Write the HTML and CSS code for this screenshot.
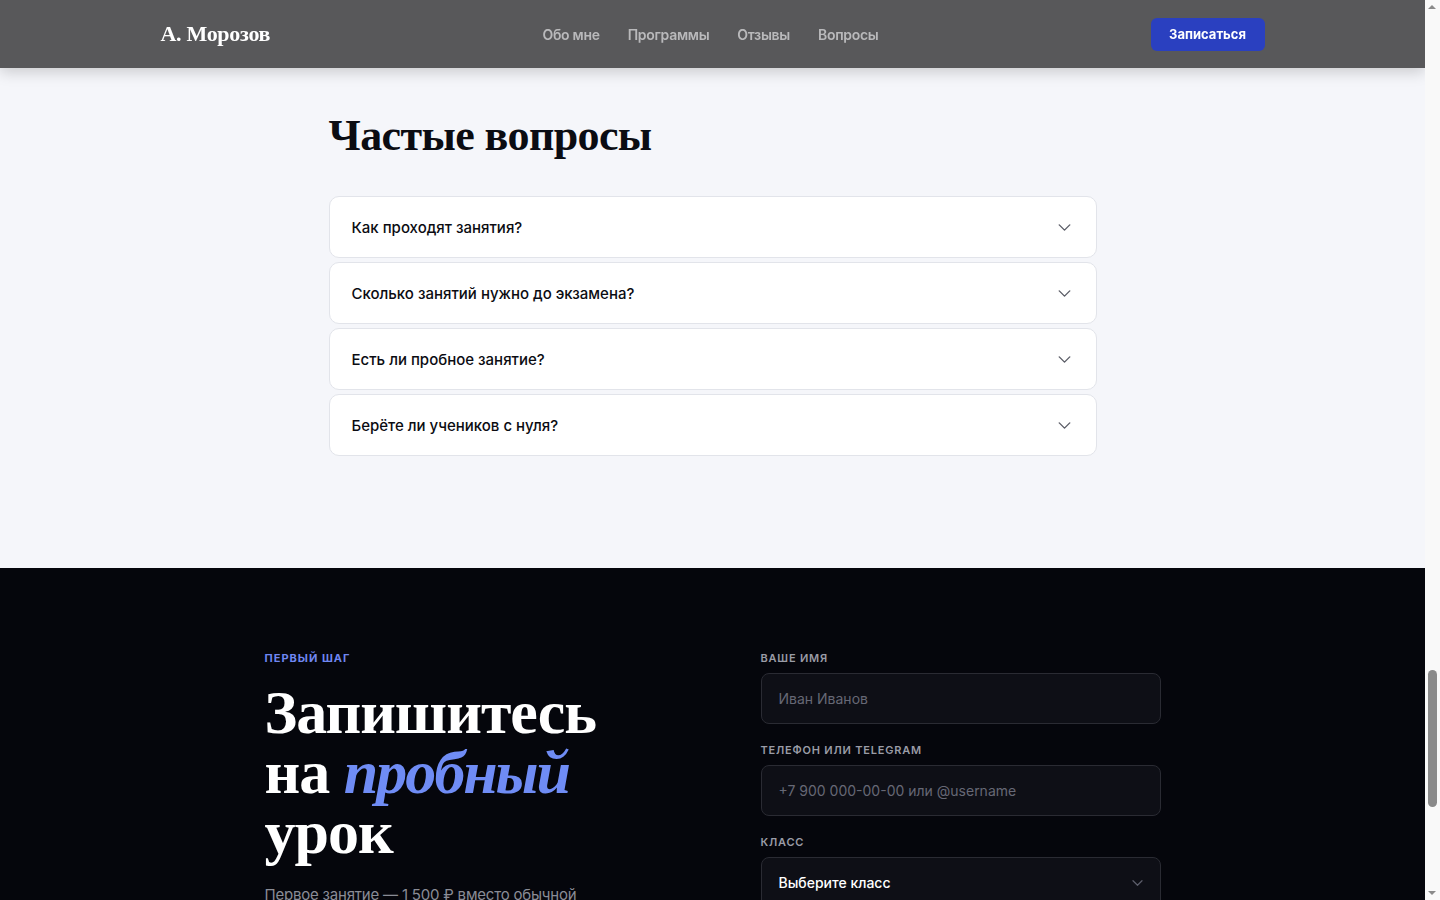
FILE: index.html
```html
<!DOCTYPE html>
<html lang="ru">
<head>
    <meta charset="UTF-8">
    <title>А. Морозов — репетитор</title>
    <link rel="stylesheet" href="styles.css">
</head>
<body>
    <header class="site-header">
        <div class="header-inner">
            <a class="logo" href="#">А. Морозов</a>
            <nav class="nav">
                <a href="#about">Обо мне</a>
                <a href="#programs">Программы</a>
                <a href="#reviews">Отзывы</a>
                <a href="#faq">Вопросы</a>
            </nav>
            <a class="header-btn" href="#signup">Записаться</a>
        </div>
    </header>

    <!-- Частые вопросы -->
    <section class="faq" id="faq">
        <div class="faq-inner">
            <h2 class="faq-title">Частые вопросы</h2>
            <div class="faq-list">
                <div class="faq-item">
                    <span>Как проходят занятия?</span>
                    <svg class="chevron" viewBox="0 0 14 8" width="13" height="7"><path d="M1 1l6 6 6-6"/></svg>
                </div>
                <div class="faq-item">
                    <span>Сколько занятий нужно до экзамена?</span>
                    <svg class="chevron" viewBox="0 0 14 8" width="13" height="7"><path d="M1 1l6 6 6-6"/></svg>
                </div>
                <div class="faq-item">
                    <span>Есть ли пробное занятие?</span>
                    <svg class="chevron" viewBox="0 0 14 8" width="13" height="7"><path d="M1 1l6 6 6-6"/></svg>
                </div>
                <div class="faq-item">
                    <span>Берёте ли учеников с нуля?</span>
                    <svg class="chevron" viewBox="0 0 14 8" width="13" height="7"><path d="M1 1l6 6 6-6"/></svg>
                </div>
            </div>
        </div>
    </section>

    <!-- Запись -->
    <section class="signup" id="signup">
        <div class="signup-inner">
            <div class="signup-text">
                <div class="eyebrow">Первый шаг</div>
                <h2 class="signup-title">Запишитесь<br>на <em>пробный</em><br>урок</h2>
                <p class="signup-desc">Первое занятие — 1 500 ₽ вместо обычной 2 500 ₽. Знакомимся, определяем уровень и составляем план подготовки.</p>
            </div>
            <form class="signup-form">
                <label class="field-label">Ваше имя</label>
                <input class="field" type="text" placeholder="Иван Иванов">
                <label class="field-label">Телефон или Telegram</label>
                <input class="field" type="text" placeholder="+7 900 000-00-00 или @username">
                <label class="field-label">Класс</label>
                <div class="field select">
                    <span>Выберите класс</span>
                    <svg class="chevron" viewBox="0 0 14 8" width="11" height="6"><path d="M1 1l6 6 6-6"/></svg>
                </div>
                <button class="submit-btn" type="button">Записаться на урок</button>
            </form>
        </div>
    </section>

    <!-- полоса прокрутки -->
    <div class="scrollbar">
        <span class="sb-arrow sb-up"></span>
        <span class="sb-thumb"></span>
        <span class="sb-arrow sb-down"></span>
    </div>
</body>
</html>
```

FILE: styles.css
```css
*{
    margin: 0;
    padding: 0;
    box-sizing: border-box;
}
body{
    font-family: Inter, "Noto Sans", sans-serif;
    background-color: #f5f6fa;
    color: #0b0c12;
    margin-right: 15px;
}
a{
    text-decoration: none;
}

/* шапка */
.site-header{
    position: fixed;
    top: 0;
    left: 0;
    right: 15px;
    z-index: 10;
    height: 68px;
    background-color: #58585a;
    box-shadow: 0 4px 14px rgba(0, 0, 0, .18);
}
.header-inner{
    max-width: 1200px;
    height: 100%;
    margin: 0 auto;
    padding: 0 48px;
    display: grid;
    grid-template-columns: 1fr auto 1fr;
    align-items: center;
}
.logo{
    justify-self: start;
    font-family: "Liberation Serif", serif;
    font-weight: 700;
    font-size: 22px;
    color: #fff;
    letter-spacing: -.3px;
}
.nav{
    display: flex;
    gap: 28px;
    margin-right: 4px;
}
.nav a{
    font-size: 14px;
    font-weight: 600;
    letter-spacing: -.3px;
    color: #b9b9bb;
}
.header-btn{
    justify-self: end;
    width: 114px;
    height: 33px;
    line-height: 33px;
    text-align: center;
    border-radius: 6px;
    background-color: #2a40c0;
    color: #fff;
    font-size: 13px;
    font-weight: 700;
}

/* вопросы */
.faq{
    padding: 110px 0 112px;
}
.faq-inner{
    width: 768px;
    margin: 0 auto;
}
.faq-title{
    font-family: "Liberation Serif", serif;
    font-weight: 700;
    font-size: 44px;
    line-height: 52px;
    letter-spacing: -.6px;
    margin-bottom: 34px;
}
.faq-list{
    display: flex;
    flex-direction: column;
    gap: 4px;
}
.faq-item{
    height: 62px;
    padding: 0 25px 0 22px;
    display: flex;
    align-items: center;
    justify-content: space-between;
    background-color: #fff;
    border: 1px solid #e2e4ea;
    border-radius: 10px;
    font-size: 15px;
    font-weight: 500;
}
.chevron{
    fill: none;
    stroke: #5a5c66;
    stroke-width: 1.6;
    stroke-linecap: round;
    stroke-linejoin: round;
}

/* запись */
.signup{
    background-color: #05060c;
    padding: 82px 0 96px;
}
.signup-inner{
    width: 896px;
    margin: 0 auto;
    display: grid;
    grid-template-columns: 1fr 400px;
    gap: 96px;
}
.eyebrow{
    font-size: 11px;
    font-weight: 700;
    line-height: 16px;
    letter-spacing: 1px;
    text-transform: uppercase;
    color: #6f86f2;
    margin-bottom: 16px;
}
.signup-title{
    font-family: "Liberation Serif", serif;
    font-weight: 700;
    font-size: 62px;
    line-height: 60px;
    letter-spacing: -1px;
    color: #fff;
    margin-bottom: 21px;
}
.signup-title em{
    color: #6f8cf5;
    letter-spacing: -2px;
}
.signup-desc{
    font-size: 15px;
    line-height: 24px;
    letter-spacing: -.2px;
    color: #8a8c96;
    max-width: 318px;
}
.signup-form{
    display: flex;
    flex-direction: column;
}
.field-label{
    font-size: 11px;
    font-weight: 600;
    line-height: 16px;
    letter-spacing: .8px;
    text-transform: uppercase;
    color: #9a9ca6;
    margin-bottom: 7px;
}
.field{
    height: 51px;
    padding: 0 17px;
    background-color: #0e0f16;
    border: 1px solid #2a2b33;
    border-radius: 8px;
    font-family: Inter, sans-serif;
    font-size: 14px;
    color: #fff;
    margin-bottom: 18px;
    outline: none;
}
.field::placeholder{
    color: #666875;
}
.select{
    display: flex;
    align-items: center;
    justify-content: space-between;
    font-weight: 500;
}
.select .chevron{
    stroke: #5c5e6a;
}
.submit-btn{
    height: 52px;
    margin-top: 8px;
    border: none;
    border-radius: 8px;
    background-color: #2a40c0;
    color: #fff;
    font-family: Inter, sans-serif;
    font-size: 15px;
    font-weight: 700;
}

/* полоса прокрутки */
.scrollbar{
    position: fixed;
    top: 0;
    right: 0;
    bottom: 0;
    z-index: 20;
    width: 15px;
    background-color: #f9f9f9;
}
.sb-arrow{
    position: absolute;
    left: 3px;
    width: 0;
    height: 0;
    border-left: 4.5px solid transparent;
    border-right: 4.5px solid transparent;
}
.sb-up{
    top: 5px;
    border-bottom: 4px solid #8a8a8a;
}
.sb-down{
    bottom: 5px;
    border-top: 4px solid #8a8a8a;
}
.sb-thumb{
    position: absolute;
    top: 670px;
    left: 3px;
    width: 9px;
    height: 137px;
    border-radius: 5px;
    background-color: #8a8a8a;
}
```
